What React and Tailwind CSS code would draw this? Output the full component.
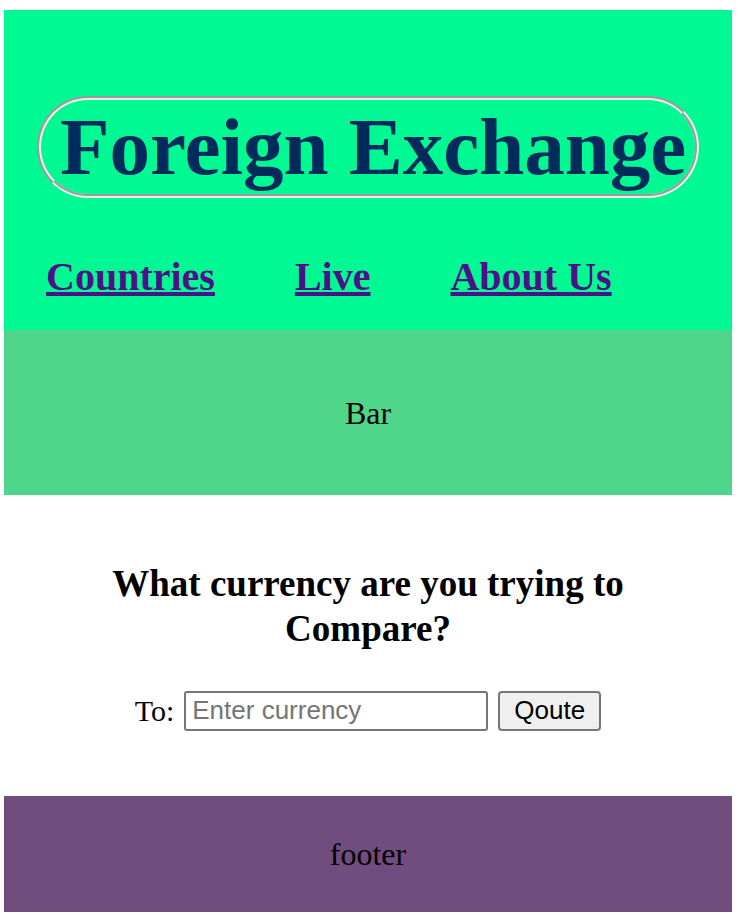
import React from 'react';

const serif = "font-['Liberation_Serif','Times_New_Roman',serif]";
const sans = "font-['Liberation_Sans',Arial,sans-serif]";

const links = ['Countries', 'Live', 'About Us'];

const App = () => {
  return (
    <div className={`min-h-[918px] bg-white pt-[10px] pl-[4px] pr-[10px] pb-[6px] ${serif}`}>
      {/* header */}
      <header className="h-[320px] bg-[#00f993] pt-[86px]">
        <div className="mx-[33px] h-[102px] rounded-full border-4 [border-style:groove] border-[#eeeeee]">
          <h1 className="pl-[19px] text-[81px] leading-[94px] font-bold text-[#012a5d] whitespace-nowrap">
            Foreign Exchange
          </h1>
        </div>
        <nav className="mt-[56px] flex gap-[80px] pl-[42px]">
          {links.map((l) => (
            <a key={l} href="#" className="text-[40px] leading-[46px] font-bold text-[#4b1186] underline">
              {l}
            </a>
          ))}
        </nav>
      </header>

      {/* bar */}
      <section className="h-[165px] bg-[#4fd68a] flex items-center justify-center">
        <span className="text-[32px] text-black">Bar</span>
      </section>

      {/* main */}
      <main className="h-[301px] pt-[66px]">
        <h2 className="max-w-[560px] mx-auto text-center text-[37px] leading-[45px] font-bold text-black">
          What currency are you trying to Compare?
        </h2>
        <div className="mt-[37px] flex items-center justify-center gap-[10px]">
          <label className="text-[30px] text-black">To:</label>
          <input
            placeholder="Enter currency"
            className={`w-[304px] h-[40px] px-[6px] border-2 border-[#767676] rounded-[3px] text-[26px] text-black placeholder:text-[#757575] ${sans}`}
          />
          <button className={`w-[103px] h-[40px] pb-[2px] bg-[#efefef] border-2 border-[#767676] rounded-[4px] text-[26px] leading-[30px] text-black ${sans}`}>
            Qoute
          </button>
        </div>
      </main>

      {/* footer */}
      <footer className="h-[116px] bg-[#714c7f] flex items-center justify-center">
        <span className="text-[32px] text-black">footer</span>
      </footer>
    </div>
  );
};

export default App;
